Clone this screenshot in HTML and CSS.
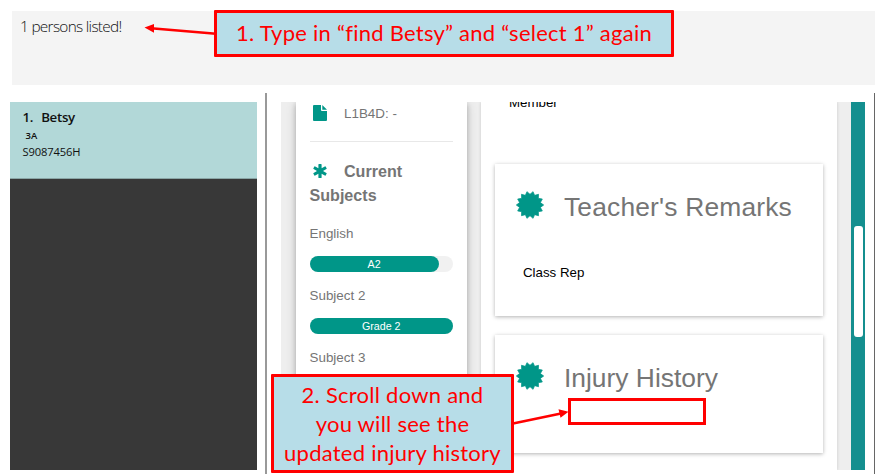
FILE: index.html
```html
<!DOCTYPE html>
<html lang="en">
<head>
<meta charset="utf-8">
<title>Address Book</title>
<link rel="stylesheet" href="styles.css">
</head>
<body>
<div class="window">
  <div class="result"><span class="result-text">1 persons listed!</span></div>
  <div class="content">
    <div class="list">
      <div class="person">
        <div class="name"><span class="index">1.</span><span>Betsy</span></div>
        <div class="class"><span>3A</span></div>
        <div class="nric"><span>S9087456H</span></div>
      </div>
    </div>
    <div class="browser">
      <div class="page">
        <aside class="profile">
          <div class="score">
            <svg class="file" viewBox="0 0 14 16"><path d="M0 1Q0 0 1 0H8V5Q8 6 9 6H14V15Q14 16 13 16H1Q0 16 0 15ZM9.3 0L14 4.7H9.3Z"/></svg>
            <span>L1B4D: -</span>
          </div>
          <h2 class="subjects"><svg class="asterisk" viewBox="0 0 14 14"><path d="M5.4 .6Q5.4 0 6 0H8Q8.600 0 8.600 .6V4.300L11.800 2.400Q12.300 2.100 12.600 2.600L13.600 4.300Q13.900 4.800 13.400 5.100L10 7L13.400 8.900Q13.900 9.200 13.600 9.700L12.600 11.400Q12.300 11.900 11.800 11.600L8.600 9.700V13.400Q8.600 14 8 14H6Q5.400 14 5.400 13.400V9.700L2.200 11.600Q1.700 11.900 1.400 11.400L.4 9.700Q.1 9.200 .6 8.900L4 7L.6 5.100Q.1 4.800 .4 4.300L1.400 2.600Q1.700 2.100 2.200 2.400L5.400 4.300Z"/></svg><span>Current Subjects</span></h2>
          <p>English</p>
          <div class="track"><div class="bar partial"><span>A2</span></div></div>
          <p>Subject 2</p>
          <div class="track"><div class="bar"><span>Grade 2</span></div></div>
          <p>Subject 3</p>
        </aside>
        <main class="details">
          <div class="member">Member</div>
          <section class="card remarks">
            <h1><svg class="badge" viewBox="-14 -14 28 28"><path id="burst"/></svg><span class="title-remarks">Teacher's Remarks</span></h1>
            <div class="value">Class Rep</div>
          </section>
          <section class="card injury">
            <h1><svg class="badge" viewBox="-14 -14 28 28"><use href="#burst"/></svg><span>Injury History</span></h1>
            <div class="highlight"></div>
          </section>
        </main>
      </div>
      <div class="scroll"><div class="thumb"></div></div>
    </div>
  </div>
</div>
<div class="callout first"><span>1. Type in “find Betsy” and “select 1” again</span></div>
<div class="callout second"><span>2. Scroll down and</span><span>you will see the</span><span>updated injury history</span></div>
<svg class="arrows" viewBox="0 0 883 474">
  <path class="line" d="M216 33.8L151 28.2M513 423.5L561 413.5"/>
  <path class="head" d="M144.500 27.600L154 24V32.800ZM568.500 411.800L558.500 409.200L560.500 417.800Z"/>
</svg>
<script src="burst.js"></script>
</body>
</html>
```
FILE: burst.js
```js
// Fourteen-point badge outline with a valley at the top centre.
const spikes = 14;
const points = [];
for (let i = 0; i < spikes * 2; i++) {
  const r = i % 2 ? 13.7 : 10.7;
  const a = i * Math.PI / spikes;
  points.push((r * Math.sin(a)).toFixed(2) + ' ' + (-r * Math.cos(a)).toFixed(2));
}
document.getElementById('burst').setAttribute('d', 'M' + points.join('L') + 'Z');
```
FILE: styles.css
```css
* { box-sizing: border-box; }
body { margin: 0; width: 883px; height: 474px; overflow: hidden; background: #fff; font-family: "Liberation Sans", Arial, sans-serif; }
.window { height: 474px; padding-top: 11px; display: flex; flex-direction: column; }
.result { height: 74px; flex: none; margin: 0 8px 8px 12px; background: #f4f4f4; padding: 5px 8px; font: 300 15.4px/22px "Open Sans", sans-serif; color: #111; letter-spacing: -.7px; }
.content { flex: 1; display: flex; }
.list { width: 247px; height: 368px; margin: 9px 8px 0 10px; background: #383838; flex: none; }
.person { height: 77px; background: #b2d8d8; padding: 5px 12.5px; font-family: "Open Sans", sans-serif; color: #111; border-bottom: 1px solid #8aa6a6; }
.name { font-weight: 600; font-size: 13.3px; line-height: 20px; display: flex; gap: 8px; letter-spacing: -.3px; }
.class { font-size: 9.5px; font-weight: 600; line-height: 17px; padding-left: 3px; }
.nric { font-size: 11.2px; line-height: 15px; letter-spacing: -.15px; }
.browser { width: 610px; flex: none; border-left: 2px solid #999; border-right: 1px solid #666; display: flex; padding: 9px 9px 4px 14px; }
.page { width: 570px; background: #eee; display: flex; overflow: hidden; }
.profile { width: 171px; margin-left: 15px; background: #fff; padding: 0 14px 0 13.5px; box-shadow: 0 2px 5px rgba(0,0,0,.2), 0 2px 10px rgba(0,0,0,.16); color: #757575; flex: none; }
.score { height: 40px; border-bottom: 1px solid #e8e8e8; font-size: 13.4px; line-height: 24px; display: flex; }
svg { fill: #009688; }
.file { width: 14px; height: 16px; margin: 3px 17px 0 3.5px; }
.subjects { margin: 17px 0 16px; font-size: 16.1px; line-height: 24px; }
.asterisk { width: 14px; height: 14px; margin: 0 17px -1px 3.5px; }
.profile p { margin: 0; font-size: 13.4px; line-height: 20px; height: 32px; padding-top: 1px; }
.track { height: 16px; margin: 1px 0 13px; border-radius: 8px; background: #f1f1f1; }
.bar { height: 16px; border-radius: 8px; background: #009688; color: #fff; font-size: 10.7px; line-height: 16px; text-align: center; }
.partial { width: 90%; }
.details { flex: 1; margin-left: 14px; margin-right: 14px; background: #fff; padding: 0 14px; box-shadow: 0 0 3px rgba(0,0,0,.16); }
.member { height: 62px; font-size: 13.3px; line-height: 15px; padding-left: 14px; margin-top: -7px; margin-bottom: 7px; }
.card { background: #fff; box-shadow: 0 1px 4px rgba(0,0,0,.3); padding: 26px 21px 0; }
.remarks { height: 152px; margin-bottom: 19px; }
.injury { height: 118px; }
.card h1 { margin: 0; font-size: 26.4px; font-weight: 400; color: #757575; line-height: 34px; display: flex; height: 34px; }
.title-remarks { letter-spacing: .17px; }
.badge { width: 28px; height: 28px; margin: 1px 20px 0 0; overflow: visible; stroke: #009688; stroke-width: .7; stroke-linejoin: round; }
.value { margin: 39px 0 0 7px; font-size: 13.3px; line-height: 20px; }
.highlight { width: 138px; height: 27px; border: 3px solid #f00; margin: 3px 0 0 51.500px; }
.scroll { width: 14px; background: #148f8f; padding: 124px 3px 0; }
.thumb { width: 9px; height: 111px; border-radius: 3px; background: #fff; }
.callout { position: absolute; background: #b7dde8; border: 3px solid #f00; color: #f00; font-family: Lato, Carlito, sans-serif; border-radius: 1px; text-align: center; font-size: 22px; letter-spacing: .25px; }
.first { left: 214px; top: 10px; width: 460px; height: 47px; line-height: 40px; white-space: nowrap; }
.second { left: 271px; top: 374px; width: 243px; height: 99px; line-height: 29px; padding-top: 3px; display: flex; flex-direction: column; align-items: center; white-space: nowrap; }
.arrows { position: absolute; left: 0; top: 0; width: 883px; height: 474px; }
.line { stroke: #f00; stroke-width: 2.6; fill: none; }
.head { fill: #f00; }
```
